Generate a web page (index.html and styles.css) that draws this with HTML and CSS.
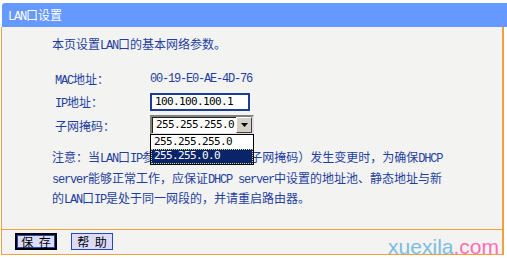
FILE: index.html
```html
<!DOCTYPE html>
<html lang="zh-CN">
<head>
<meta charset="utf-8">
<title>LAN口设置</title>
<link rel="stylesheet" href="styles.css">
</head>
<body>
<div class="page">
  <div class="head"><span class="en">LAN</span>口设置</div>
  <div class="main">
    <p class="intro">本页设置<span class="en">LAN</span>口的基本网络参数。</p>
    <div class="form">
      <div class="row row-mac">
        <span class="label"><span class="en">MAC</span>地址<span class="colon">：</span></span>
        <span class="value en">00-19-E0-AE-4D-76</span>
      </div>
      <div class="row row-ip">
        <span class="label"><span class="en">IP</span>地址<span class="colon">：</span></span>
        <span class="input num">100.100.100.1</span>
      </div>
      <div class="row row-mask">
        <span class="label">子网掩码<span class="colon">：</span></span>
        <span class="select">
          <span class="sel-text num">255.255.255.0</span>
          <span class="sel-btn"><svg width="7" height="4" viewBox="0 0 7 4"><path d="M0 0H7L3.5 4Z" fill="#000"/></svg></span>
          <span class="dropdown">
            <span class="opt num">255.255.255.0</span>
            <span class="opt opt-on num">255.255.0.0</span>
          </span>
        </span>
      </div>
    </div>
    <p class="note">注意<span class="colon">：</span>当<span class="en">LAN</span>口<span class="en">IP</span>参数（包括<span class="en">IP</span>地址和子网掩码）发生变更时，为确保<span class="en">DHCP</span><br><span class="en">server</span>能够正常工作，应保证<span class="en">DHCP server</span>中设置的地址池、静态地址与新<br>的<span class="en">LAN</span>口<span class="en">IP</span>是处于同一网段的，并请重启路由器。</p>
  </div>
  <div class="foot">
    <span class="btn btn-focus">保 存</span>
    <span class="btn">帮 助</span>
  </div>
  <div class="mark">xuexila<span class="dot">.com</span></div>
</div>
</body>
</html>
```
FILE: styles.css
```css
* { box-sizing: border-box; }
html, body { margin: 0; padding: 0; background: #fff; }
body {
  font-family: "Noto Sans CJK SC", "Noto Sans", sans-serif;
  font-size: 12px;
  color: #1f3f9f;
}
.en {
  font-family: "Liberation Mono", "Noto Sans CJK SC", monospace;
  font-size: 12px;
  letter-spacing: -1.2px;
}
.colon {
  font-family: "Noto Sans CJK TC", "Noto Sans CJK SC", sans-serif;
}
.num {
  font-family: "DejaVu Sans Mono", monospace;
  font-size: 11px;
  letter-spacing: -0.62px;
  color: #000;
}
.page {
  position: relative;
  margin: 3px 0 0 1px;
  width: 503px;
}
.head {
  height: 24px;
  margin: 0 -4px 0 1px;
  background: #6699ff;
  border-top-left-radius: 3px;
  color: #fff;
  line-height: 24px;
  padding-left: 6px;
}
.head .en { color: #fff; }
.main {
  height: 203px;
  background: #f3f3f1;
  border-left: 1px solid #f0a040;
  border-right: 2px solid #f0a040;
  border-bottom: 1px solid #f0a040;
  padding: 8px 0 0 50px;
}
.intro {
  margin: 0;
  line-height: 18px;
}
.form {
  margin: 15px 0 0 3px;
  display: flex;
  flex-direction: column;
}
.row {
  display: flex;
  align-items: center;
}
.label { width: 95px; }
.row-mac { height: 18px; }
.row-ip { height: 18px; margin-top: 5px; }
.row-mask { height: 20px; margin-top: 4px; }
.value { color: #1f3f9f; }
.input {
  width: 100px;
  height: 18px;
  border: 2px solid #1d3c96;
  background: #fff;
  padding-left: 3px;
  line-height: 14px;
}
.select {
  position: relative;
  width: 104px;
  height: 20px;
  display: flex;
  align-items: center;
  background: #fff;
  border: 2px solid;
  border-color: #808080 #e0e0e0 #e0e0e0 #808080;
  box-shadow: inset 1px 1px 0 #202020;
}
.sel-text { flex: 1; padding-left: 4px; line-height: 16px; }
.sel-btn {
  width: 16px;
  height: 16px;
  background: #d4d0c8;
  border: 1px solid;
  border-color: #fff #404040 #404040 #fff;
  display: flex;
  align-items: center;
  justify-content: center;
}
.dropdown {
  position: absolute;
  left: -2px;
  top: 17px;
  width: 104px;
  height: 31px;
  background: #fff;
  border: 1px solid #000;
  display: flex;
  flex-direction: column;
  z-index: 2;
}
.opt {
  height: 14px;
  line-height: 14px;
  padding-left: 3px;
}
.opt-on {
  height: 15px;
  background: #0a246a;
  color: #fff;
  outline: 1px dotted #d8d890;
  outline-offset: -1px;
}
.note {
  margin: 13px 0 0;
  line-height: 17.5px;
}
.foot {
  height: 25px;
  border-left: 1px solid #f0a040;
  border-right: 2px solid #f0a040;
  border-bottom: 1px solid #f0a040;
  background: #f3f3f1;
  padding: 3px 0 0 13px;
  display: flex;
  gap: 14px;
  align-items: flex-start;
}
.btn {
  width: 42px;
  height: 17px;
  background: #dcdcf8;
  border: 1px solid #2a48b0;
  color: #000;
  font-size: 12px;
  line-height: 15px;
  text-align: center;
  word-spacing: 3px;
}
.btn-focus {
  border: 2px solid #000;
  box-shadow: inset 0 0 0 1px #2a48b0;
  line-height: 13px;
}
.mark {
  position: absolute;
  right: 5px;
  bottom: -4px;
  font-family: "Liberation Sans", Arial, sans-serif;
  font-size: 21px;
  line-height: 24px;
  color: #7dbde0;
}
.mark .dot { color: #ff6eb4; }
```
